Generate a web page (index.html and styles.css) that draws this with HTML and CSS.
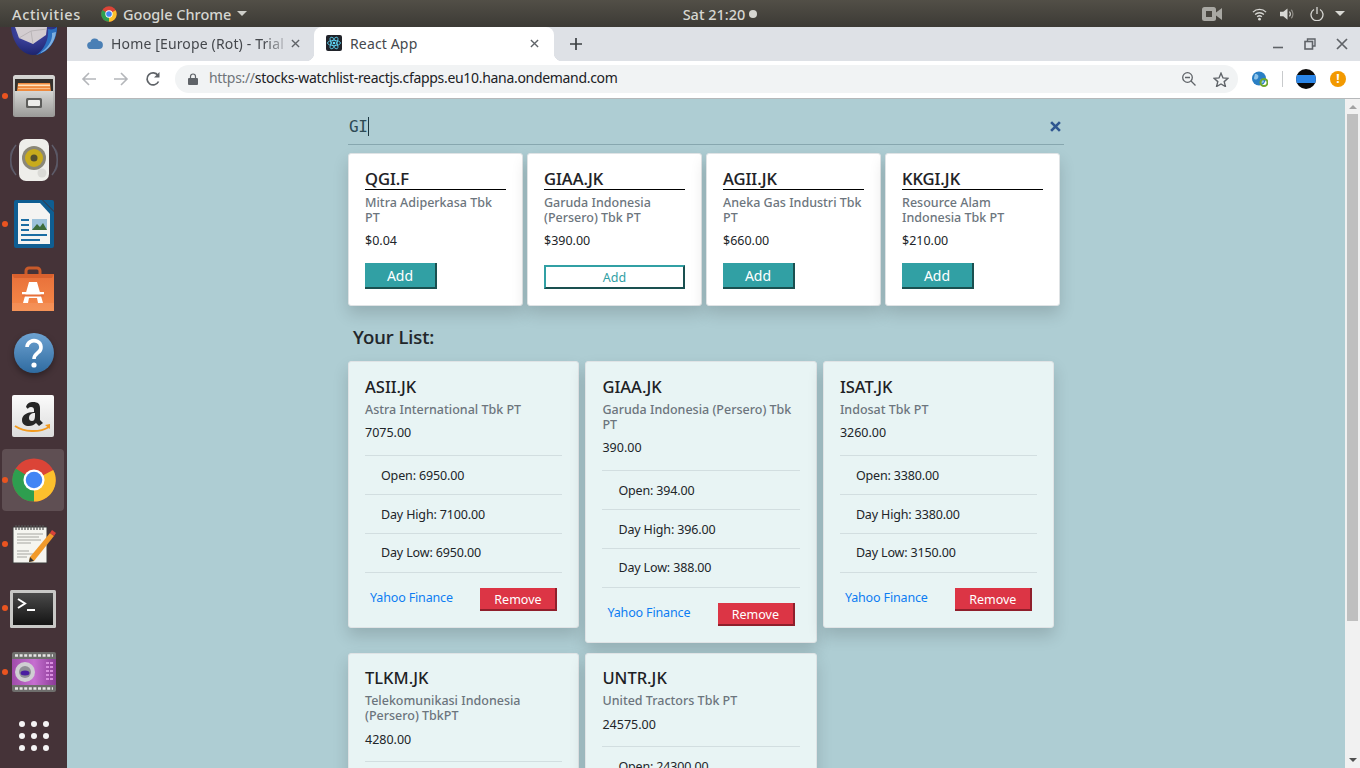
FILE: index.html
```html
<!DOCTYPE html>
<html lang="en">
<head>
<meta charset="utf-8">
<title>React App</title>
<link rel="stylesheet" href="styles.css">
</head>
<body>
<svg class="defs" width="0" height="0">
  <defs>
    <linearGradient id="gCab" x1="0" y1="0" x2="0" y2="1"><stop offset="0" stop-color="#d6d6d4"/><stop offset="1" stop-color="#9a9a98"/></linearGradient>
    <linearGradient id="gBag" x1="0" y1="0" x2="0" y2="1"><stop offset="0" stop-color="#e8703a"/><stop offset="1" stop-color="#f58a4a"/></linearGradient>
    <linearGradient id="gHelp" x1="0" y1="0" x2="0" y2="1"><stop offset="0" stop-color="#6ea3d2"/><stop offset="1" stop-color="#2f6ba0"/></linearGradient>
    <linearGradient id="gAmz" x1="0" y1="0" x2="0" y2="1"><stop offset="0" stop-color="#fbfbfb"/><stop offset="1" stop-color="#dcdcdc"/></linearGradient>
    <linearGradient id="gTerm" x1="0" y1="0" x2="0" y2="1"><stop offset="0" stop-color="#4a4a4a"/><stop offset="1" stop-color="#141414"/></linearGradient>
    <linearGradient id="gCam" x1="0" y1="0" x2="1" y2="0"><stop offset="0" stop-color="#a04cab"/><stop offset=".5" stop-color="#c66fd0"/><stop offset="1" stop-color="#8a3a96"/></linearGradient>
    <radialGradient id="gTb" cx=".4" cy=".2" r=".9"><stop offset="0" stop-color="#4a4fb0"/><stop offset="1" stop-color="#171f66"/></radialGradient>
  </defs>
</svg>

<header class="topbar">
  <div class="topbar-left">
    <span class="activities">Activities</span>
    <span class="appmenu">
      <svg class="ico16" viewBox="0 0 48 48"><circle cx="24" cy="24" r="23" fill="#db4437"/><path d="M24 24 44 13A23 23 0 0 1 24 47Z" fill="#fbc02d"/><path d="M24 24 24 47A23 23 0 0 1 4 12Z" fill="#2e9e4f"/><circle cx="24" cy="24" r="11" fill="#fff"/><circle cx="24" cy="24" r="8.5" fill="#4285f4"/></svg>
      Google Chrome
      <svg class="caret" viewBox="0 0 10 5"><path d="M0 0h10L5 5z" fill="#cfcfca"/></svg>
    </span>
  </div>
  <div class="clock">Sat 21:20 <i class="clockdot"></i></div>
  <div class="tray">
    <svg class="tray-cam" viewBox="0 0 20 14"><rect x="0" y="0" width="14" height="14" rx="2.5" fill="#a9a8a3"/><rect x="4" y="4" width="6" height="6" fill="#48453f"/><path d="M14 5.500 20 1v12l-6-4.500z" fill="#a9a8a3"/></svg>
    <svg class="tray-wifi" viewBox="0 0 16 14"><path d="M1 5a10 10 0 0 1 14 0M3.300 7.500a7 7 0 0 1 9.400 0M5.500 10a3.800 3.800 0 0 1 5 0" fill="none" stroke="#d8d8d4" stroke-width="1.400"/><circle cx="8" cy="12.500" r="1.500" fill="#d8d8d4"/></svg>
    <svg class="tray-vol" viewBox="0 0 16 14"><path d="M0 4.500h3.500L8 1v12L3.500 9.500H0z" fill="#d8d8d4"/><path d="M10 4.500a3.500 3.500 0 0 1 0 5" fill="none" stroke="#d8d8d4" stroke-width="1.300"/><path d="M12 2.500a6.500 6.500 0 0 1 0 9" fill="none" stroke="#8d8b85" stroke-width="1.300"/></svg>
    <svg class="tray-pow" viewBox="0 0 14 14"><path d="M4 2.500a6 6 0 1 0 6 0" fill="none" stroke="#d8d8d4" stroke-width="1.300"/><path d="M7 0v7" stroke="#d8d8d4" stroke-width="1.300"/></svg>
    <svg class="caret tray-caret" viewBox="0 0 10 5"><path d="M0 0h10L5 5z" fill="#d8d8d4"/></svg>
  </div>
</header>

<div class="desktop">
  <nav class="dock">
    <div class="slot slot-first">
      <svg viewBox="0 0 48 29" class="dock-tb"><path d="M1 0h46C46 16 36 28 23 28 11 28 2 14 1 0z" fill="url(#gTb)"/><path d="M5 0 9 11 23 17 36 8 37 0z" fill="#d3cdd0"/><path d="M9 11 21 4M23 17 21 4 37 2" fill="none" stroke="#b3adb0" stroke-width=".8"/><path d="M38 2c4 1 7 0 9-2 0 14-9 26-21 28 8-5 13-15 12-26z" fill="#2b6fc0"/><path d="M42 6c1 8-5 16-12 20 8-2 15-11 16-21z" fill="#7fb0e0"/></svg>
    </div>
    <div class="slot running">
      <svg class="ic-cab" viewBox="0 0 44 44"><rect x="1" y="1" width="42" height="42" rx="2.500" fill="url(#gCab)"/><rect x="3" y="5" width="38" height="12" fill="#34302c"/><path d="M5 17 6 9h32l1 8z" fill="#ee8a3e"/><rect x="6" y="10.500" width="32" height="1.600" fill="#ffe3bd"/><rect x="6" y="14" width="32" height="1" fill="#f8c08a"/><path d="M3 17h38v26H3z" fill="url(#gCab)"/><rect x="14" y="24" width="16" height="10" rx="1.500" fill="#5d5d5b"/><rect x="16" y="26" width="12" height="6" rx="1" fill="#ececea"/></svg>
    </div>
    <div class="slot">
      <svg class="ic-rhy" viewBox="0 0 48 44"><path d="M6 7a24 24 0 0 0 0 30M42 7a24 24 0 0 1 0 30" fill="none" stroke="#6a6f80" stroke-width="1.500" opacity=".7"/><path d="M3 11a20 20 0 0 0 0 22M45 11a20 20 0 0 1 0 22" fill="none" stroke="#5a5866" stroke-width="1.500" opacity=".7"/><rect x="9" y="1" width="30" height="42" rx="7" fill="#eeeeea"/><circle cx="24" cy="20" r="12" fill="#8a8778"/><circle cx="24" cy="20" r="9" fill="#c8ab1c"/><circle cx="24" cy="20" r="3.500" fill="#55502e"/><circle cx="32" cy="35" r="4.500" fill="#dadad6"/></svg>
    </div>
    <div class="slot running">
      <svg class="ic-writer" viewBox="0 0 40 48"><path d="M2 0h26l12 12v34a2 2 0 0 1-2 2H2a2 2 0 0 1-2-2V2a2 2 0 0 1 2-2z" fill="#0f5e92"/><path d="M4 3h22l10 11v30H4z" fill="#f4f4f2"/><path d="M29 0h9a2 2 0 0 1 2 2v9z" fill="#0f5e92"/><path d="M7 19h8v2H7zM7 24h8v2H7zM7 29h8v2H7zM7 34h26v2H7zM7 39h19v2H7z" fill="#1a6da3"/><rect x="18" y="19" width="15" height="11" fill="#9cc2da"/><path d="M18 30l5-6 3 3 3-4 4 7z" fill="#3d6d3a"/></svg>
    </div>
    <div class="slot">
      <svg class="ic-bag" viewBox="0 0 42 46"><path d="M14 11V6a3 3 0 0 1 3-3h8a3 3 0 0 1 3 3v5" fill="none" stroke="#c85a2a" stroke-width="3"/><path d="M0 9h42v37H0z" fill="url(#gBag)"/><path d="M0 9h42l-2 4H2z" fill="#d9612e"/><path d="M17 17h8l6 21h-5l-1-5h-8l-1 5h-5z" fill="#fff"/><rect x="10" y="27" width="22" height="2.500" fill="#fff"/><rect x="10" y="29.500" width="22" height="2" fill="#e8703a"/><path d="M0 38h42v8H0z" fill="#fff" opacity=".08"/></svg>
    </div>
    <div class="slot">
      <svg class="ic-help" viewBox="0 0 40 40"><circle cx="20" cy="20" r="20" fill="url(#gHelp)"/><path d="M13 14a7 6.500 0 1 1 11 5.500c-2.500 2-4 3-4 6.500" fill="none" stroke="#fff" stroke-width="3.600"/><circle cx="20" cy="32" r="2.600" fill="#fff"/></svg>
    </div>
    <div class="slot">
      <svg class="ic-amz" viewBox="0 0 42 42"><rect width="42" height="42" rx="2" fill="url(#gAmz)"/><path d="M14 12c1-4 4-5 7-5 5 0 7 2 7 6v12l3 3-4 3-3-3c-2 2-4 3-7 3-4 0-7-2-7-6 0-5 5-8 12-8v-2c0-2-1-3-3-3s-3 1-3 2zM23 18c-4 0-6 2-6 5 0 2 1 3 3 3 2 0 3-2 3-5z" fill="#262626"/><path d="M3 31c9 6 24 7 34 1" fill="none" stroke="#f29a1f" stroke-width="2"/><path d="M33 30l5-1 0 5z" fill="#f29a1f"/></svg>
    </div>
    <div class="slot running active">
      <svg class="dock-ico" viewBox="0 0 48 48"><circle cx="24" cy="24" r="23.500" fill="#db4437"/><path d="M24 24 45 13A23.500 23.500 0 0 1 24 47.500Z" fill="#fbc02d"/><path d="M24 24 24 47.500A23.500 23.500 0 0 1 4 11.500Z" fill="#2e9e4f"/><circle cx="24" cy="24" r="11.500" fill="#fff"/><circle cx="24" cy="24" r="9" fill="#4285f4"/></svg>
    </div>
    <div class="slot running">
      <svg class="ic-note" viewBox="0 0 44 40"><path d="M1 3h34v36H1z" fill="#f5f5f0" stroke="#3a3a3a"/><path d="M4 1v5M7 1v5M10 1v5M13 1v5M16 1v5M19 1v5M22 1v5M25 1v5M28 1v5M31 1v5" stroke="#555" stroke-width="1.200"/><path d="M5 10h26M5 13h22M5 16h24M5 19h14M5 27h12M5 30h18M5 33h10" stroke="#a5a5a0"/><path d="M18 33 38 9l4 3-20 25-5 1z" fill="#f19a2a"/><path d="M38 9l2-3 4 3-2 3z" fill="#d9423a"/><path d="M17 38l1-5 4 4z" fill="#333"/></svg>
    </div>
    <div class="slot running">
      <svg class="ic-term" viewBox="0 0 46 38"><rect width="46" height="38" rx="1.500" fill="#c8c8c6"/><rect x="3" y="3" width="40" height="32" fill="url(#gTerm)"/><path d="M8 9l7 4.500-7 4.500" fill="none" stroke="#fff" stroke-width="2"/><path d="M17 20h8" stroke="#fff" stroke-width="2"/></svg>
    </div>
    <div class="slot running">
      <svg class="ic-cam" viewBox="0 0 44 40"><rect width="44" height="40" rx="2" fill="#6e6e6c"/><rect y="7" width="44" height="26" fill="url(#gCam)"/><path d="M3 3.500h38M3 36.500h38" stroke="#e6e6e4" stroke-width="2.500" stroke-dasharray="3 1.600"/><circle cx="13" cy="20" r="10" fill="#cfcfd2"/><circle cx="13" cy="20" r="6" fill="#8f8f96"/><ellipse cx="13" cy="21" rx="4.500" ry="2.500" fill="#4a1ea0"/><path d="M34 10h3v2h-3zM38 10h3v2h-3zM34 14h3v2h-3zM38 14h3v2h-3zM34 18h3v2h-3zM38 18h3v2h-3zM34 22h3v2h-3zM38 22h3v2h-3zM34 26h3v2h-3zM38 26h3v2h-3z" fill="#d98fe0"/></svg>
    </div>
    <div class="slot">
      <svg class="dock-grid" viewBox="0 0 30 30"><g fill="#f4f4f4"><circle cx="3" cy="3" r="3"/><circle cx="15" cy="3" r="3"/><circle cx="27" cy="3" r="3"/><circle cx="3" cy="15" r="3"/><circle cx="15" cy="15" r="3"/><circle cx="27" cy="15" r="3"/><circle cx="3" cy="27" r="3"/><circle cx="15" cy="27" r="3"/><circle cx="27" cy="27" r="3"/></g></svg>
    </div>
  </nav>

  <div class="browser">
    <div class="tabstrip">
      <div class="tab">
        <svg class="tab-fav" viewBox="0 0 16 11"><path d="M4 11a3.500 3.500 0 0 1-.6-7A4.500 4.500 0 0 1 11.800 3 4 4 0 0 1 12 11z" fill="#4a7fb5"/></svg>
        <span class="tab-title fade">Home [Europe (Rot) - Trial</span>
        <svg class="tab-x" viewBox="0 0 10 10"><path d="M1 1l8 8M9 1l-8 8" stroke="#5f6368" stroke-width="1.500"/></svg>
      </div>
      <div class="tab tab-active">
        <svg class="tab-fav16" viewBox="0 0 16 16"><rect width="16" height="16" rx="2" fill="#20232a"/><g fill="none" stroke="#61dafb" stroke-width=".8"><ellipse cx="8" cy="8" rx="6.500" ry="2.600"/><ellipse cx="8" cy="8" rx="6.500" ry="2.600" transform="rotate(60 8 8)"/><ellipse cx="8" cy="8" rx="6.500" ry="2.600" transform="rotate(120 8 8)"/></g><circle cx="8" cy="8" r="1.300" fill="#61dafb"/></svg>
        <span class="tab-title">React App</span>
        <svg class="tab-x" viewBox="0 0 10 10"><path d="M1 1l8 8M9 1l-8 8" stroke="#5f6368" stroke-width="1.500"/></svg>
      </div>
      <svg class="tab-new" viewBox="0 0 12 12"><path d="M6 0v12M0 6h12" stroke="#3c4043" stroke-width="1.700"/></svg>
      <div class="winctl">
        <svg class="win-ico" viewBox="0 0 12 12"><path d="M1 9.500h10" stroke="#5f6368" stroke-width="1.600"/></svg>
        <svg class="win-ico" viewBox="0 0 12 12"><path d="M3.500 3.500V1h7.500v7h-2.500" fill="none" stroke="#5f6368" stroke-width="1.400"/><rect x="1" y="3.500" width="7.500" height="7.500" fill="none" stroke="#5f6368" stroke-width="1.600"/></svg>
        <svg class="win-ico" viewBox="0 0 12 12"><path d="M1 1l10 10M11 1 1 11" stroke="#5f6368" stroke-width="1.700"/></svg>
      </div>
    </div>

    <div class="toolbar">
      <svg class="nav-ico" viewBox="0 0 16 16"><path d="M15 8H2M8 2 2 8l6 6" fill="none" stroke="#b4b6ba" stroke-width="1.600"/></svg>
      <svg class="nav-ico" viewBox="0 0 16 16"><path d="M1 8h13M8 2l6 6-6 6" fill="none" stroke="#b4b6ba" stroke-width="1.600"/></svg>
      <svg class="nav-ico" viewBox="0 0 16 16"><path d="M13.500 10.500A6 6 0 1 1 13 4.500" fill="none" stroke="#5f6368" stroke-width="1.700"/><path d="M14.500 1v5.500H9z" fill="#5f6368"/></svg>
      <div class="omnibox">
        <svg class="lock" viewBox="0 0 10 12"><path d="M2.500 5V3.500a2.500 2.500 0 0 1 5 0V5" fill="none" stroke="#5f6368" stroke-width="1.200"/><rect y="5" width="10" height="7" rx="1" fill="#5f6368"/></svg>
        <span class="url"><span class="url-scheme">https://</span>stocks-watchlist-reactjs.cfapps.eu10.hana.ondemand.com</span>
        <svg class="omni-zoom" viewBox="0 0 14 14"><circle cx="5.500" cy="5.500" r="4.800" fill="none" stroke="#5f6368" stroke-width="1.300"/><path d="M3 5.500h5M9 9l4.500 4.500" stroke="#5f6368" stroke-width="1.300"/></svg>
        <svg class="omni-star" viewBox="0 0 16 15"><path d="M8 1.200l2 4.700 5 .4-3.800 3.300 1.200 4.900L8 12l-4.400 2.500 1.200-4.900L1 6.300l5-.4z" fill="none" stroke="#5f6368" stroke-width="1.400"/></svg>
      </div>
      <svg class="ext-globe" viewBox="0 0 16 16"><circle cx="7" cy="7.500" r="7" fill="#2a7fc4"/><path d="M3 3c3 0 4 2 3 4S2 9 2 7zM8 9c2-1 4 0 4 2l-3 2z" fill="#8fc4ea"/><circle cx="12" cy="11.500" r="3.500" fill="none" stroke="#6fa82e" stroke-width="2"/></svg>
      <i class="tb-sep"></i>
      <span class="avatar"><i class="avatar-band"></i></span>
      <span class="warn">!</span>
    </div>

    <div class="viewport">
      <main class="page">
        <div class="wrap">
          <div class="search">
            <span class="search-text">GI<i class="cursor"></i></span>
            <svg class="search-x" viewBox="0 0 10 10"><path d="M1 1l8 8M9 1l-8 8" stroke="#2f5690" stroke-width="2.400"/></svg>
          </div>

          <section class="results">
            <article class="rcard">
              <h3 class="rtitle">QGI.F</h3>
              <p class="sub">Mitra Adiperkasa Tbk PT</p>
              <p class="price">$0.04</p>
              <button class="add">Add</button>
            </article>
            <article class="rcard">
              <h3 class="rtitle">GIAA.JK</h3>
              <p class="sub">Garuda Indonesia (Persero) Tbk PT</p>
              <p class="price">$390.00</p>
              <button class="add add-hover">Add</button>
            </article>
            <article class="rcard">
              <h3 class="rtitle">AGII.JK</h3>
              <p class="sub">Aneka Gas Industri Tbk PT</p>
              <p class="price">$660.00</p>
              <button class="add">Add</button>
            </article>
            <article class="rcard">
              <h3 class="rtitle">KKGI.JK</h3>
              <p class="sub">Resource Alam Indonesia Tbk PT</p>
              <p class="price">$210.00</p>
              <button class="add">Add</button>
            </article>
          </section>

          <h2 class="list-head">Your List:</h2>

          <section class="list">
            <article class="lcard">
              <h3 class="ltitle">ASII.JK</h3>
              <p class="sub">Astra International Tbk PT</p>
              <p class="price lprice">7075.00</p>
              <ul class="stats"><li>Open: 6950.00</li><li>Day High: 7100.00</li><li>Day Low: 6950.00</li></ul>
              <div class="lfoot"><a class="yf">Yahoo Finance</a><button class="remove">Remove</button></div>
            </article>
            <article class="lcard">
              <h3 class="ltitle">GIAA.JK</h3>
              <p class="sub">Garuda Indonesia (Persero) Tbk PT</p>
              <p class="price lprice">390.00</p>
              <ul class="stats"><li>Open: 394.00</li><li>Day High: 396.00</li><li>Day Low: 388.00</li></ul>
              <div class="lfoot"><a class="yf">Yahoo Finance</a><button class="remove">Remove</button></div>
            </article>
            <article class="lcard">
              <h3 class="ltitle">ISAT.JK</h3>
              <p class="sub">Indosat Tbk PT</p>
              <p class="price lprice">3260.00</p>
              <ul class="stats"><li>Open: 3380.00</li><li>Day High: 3380.00</li><li>Day Low: 3150.00</li></ul>
              <div class="lfoot"><a class="yf">Yahoo Finance</a><button class="remove">Remove</button></div>
            </article>
            <article class="lcard">
              <h3 class="ltitle">TLKM.JK</h3>
              <p class="sub">Telekomunikasi Indonesia (Persero) TbkPT</p>
              <p class="price lprice">4280.00</p>
              <ul class="stats"><li>Open: 4280.00</li></ul>
            </article>
            <article class="lcard">
              <h3 class="ltitle">UNTR.JK</h3>
              <p class="sub">United Tractors Tbk PT</p>
              <p class="price lprice">24575.00</p>
              <ul class="stats"><li>Open: 24300.00</li></ul>
            </article>
          </section>
        </div>
      </main>
      <div class="scrollbar">
        <svg class="sb-arrow" viewBox="0 0 8 4"><path d="M4 0l4 4H0z" fill="#a3a3a3"/></svg>
        <div class="sb-thumb"></div>
        <svg class="sb-arrow" viewBox="0 0 8 4"><path d="M0 0h8L4 4z" fill="#505050"/></svg>
      </div>
    </div>
  </div>
</div>
</body>
</html>
```
FILE: styles.css
```css
* { box-sizing: border-box; }
html, body { margin: 0; height: 100%; }
body {
  width: 1360px; height: 768px; overflow: hidden;
  display: flex; flex-direction: column;
  font-family: "Noto Sans", "Open Sans", sans-serif;
  color: #212529;
  background: #453338;
}
.defs { position: absolute; }
svg { display: block; flex: none; }
p, h2, h3, ul { margin: 0; padding: 0; }

/* top bar */
.topbar {
  height: 27px; flex: none; display: grid; grid-template-columns: 1fr auto 1fr; align-items: center;
  background: linear-gradient(#524f47, #3c3a35);
  color: #d6d6d1; font-size: 14.500px; font-weight: 500;
}
.topbar-left { display: flex; align-items: center; padding-left: 12px; gap: 20px; }
.activities { letter-spacing: .65px; }
.appmenu { display: flex; align-items: center; gap: 6px; }
.ico16 { width: 16px; height: 16px; }
.caret { width: 10px; height: 5px; margin-left: 0; }
.clock { display: flex; align-items: center; gap: 4px; padding-left: 80px; }
.clockdot { width: 8px; height: 8px; border-radius: 50%; background: #d6d6d1; }
.tray { display: flex; align-items: center; justify-content: flex-end; }
.tray-cam { width: 20px; height: 14px; margin-right: 30px; }
.tray-wifi { width: 15px; height: 14px; margin-right: 13px; }
.tray-vol { width: 15px; height: 14px; margin-right: 15px; }
.tray-pow { width: 14px; height: 14px; margin-right: 11px; }
.tray-caret { margin: 0 15px 0 0; }

.desktop { flex: 1; display: flex; min-height: 0; }

/* dock */
.dock { width: 67px; flex: none; background: #453338; display: flex; flex-direction: column; overflow: hidden; }
.slot { height: 64px; flex: none; display: flex; align-items: center; justify-content: center; position: relative; }
.slot-first { height: 37px; align-items: flex-start; }
.dock-tb { width: 48px; height: 29px; }
.dock-ico { width: 44px; height: 44px; }
.ic-cab { width: 44px; height: 44px; }
.ic-rhy { width: 48px; height: 44px; }
.ic-writer { width: 40px; height: 48px; }
.ic-bag { width: 42px; height: 46px; margin-right: 1px; }
.ic-help { width: 40px; height: 40px; margin-top: 1px; filter: drop-shadow(0 3px 3px rgba(0,0,0,.35)); }
.ic-amz { width: 42px; height: 42px; margin-right: 1px; }
.ic-note { width: 44px; height: 40px; }
.ic-term { width: 46px; height: 38px; margin: 2px 1px 0 0; }
.ic-cam { width: 44px; height: 40px; }
.dock-grid { width: 30px; height: 30px; }
.running::before {
  content: ""; position: absolute; left: 2px; top: 50%; margin-top: -3px;
  width: 6px; height: 6px; border-radius: 50%; background: #e95420; z-index: 1;
}
.active::after {
  content: ""; position: absolute; left: 2px; top: 1px; width: 62px; height: 62px;
  border-radius: 4px; background: #5f4f53;
}
.active .dock-ico { position: relative; z-index: 1; }

/* browser */
.browser { flex: 1; min-width: 0; display: flex; flex-direction: column; background: #fff; }
.tabstrip { height: 34px; flex: none; background: #dee1e6; display: flex; align-items: flex-end; }
.tab { width: 247px; height: 34px; display: flex; align-items: center; padding: 0 14px 2px 20px; color: #45484d; font-size: 14px; letter-spacing: .15px; }
.tab-active {
  width: 240px; background: #fff; border-radius: 8px 8px 0 0; padding: 0 15px 2px 12px; position: relative;
}
.tab-active::before, .tab-active::after {
  content: ""; position: absolute; bottom: 0; width: 8px; height: 8px;
}
.tab-active::before { left: -8px; background: radial-gradient(circle at 0 0, #dee1e6 8px, #fff 8.5px); }
.tab-active::after { right: -8px; background: radial-gradient(circle at 100% 0, #dee1e6 8px, #fff 8.5px); }
.tab-fav { width: 16px; height: 11px; margin-right: 8px; }
.tab-fav16 { width: 16px; height: 16px; margin-right: 8px; }
.tab-title { flex: 1; white-space: nowrap; overflow: hidden; }
.fade { -webkit-mask-image: linear-gradient(90deg, #000 85%, transparent 100%); mask-image: linear-gradient(90deg, #000 85%, transparent 100%); }
.tab-x { width: 9px; height: 9px; }
.tab-new { width: 12px; height: 12px; margin: 0 0 11px 16px; }
.winctl { margin-left: auto; display: flex; align-items: center; gap: 20px; height: 34px; padding: 0 12px 0 0; }
.win-ico { width: 12px; height: 12px; }

.toolbar { height: 38px; flex: none; display: flex; align-items: flex-start; padding: 4px 0 0 14px; border-bottom: 1px solid #b6b8ba; background: #fff; }
.nav-ico { width: 16px; height: 16px; margin: 6px 16px 0 0; }
.omnibox {
  width: 1063px; height: 28px; margin-left: -2px; border-radius: 14px; background: #f1f3f4;
  display: flex; align-items: center; padding: 0 9px 0 13px;
}
.lock { width: 10px; height: 12px; margin-right: 11px; }
.url { flex: 1; font-size: 14px; line-height: 26px; padding-bottom: 2px; color: #202124; white-space: nowrap; letter-spacing: -.31px; }
.url-scheme { color: #70757a; }
.omni-zoom { width: 14px; height: 14px; margin-right: 17px; }
.omni-star { width: 16px; height: 15px; }
.ext-globe { width: 16px; height: 16px; margin: 6px 0 0 14px; }
.tb-sep { width: 1px; height: 16px; background: #c8cacc; margin: 6px 0 0 14px; }
.avatar { width: 20px; height: 20px; margin: 4px 0 0 13px; border-radius: 50%; background: #0a0a0a; display: flex; align-items: center; overflow: hidden; }
.avatar-band { width: 100%; height: 8px; background: #2b86e8; }
.warn { width: 16px; height: 16px; margin: 6px 0 0 14px; border-radius: 50%; background: #f29900; color: #fff; font-size: 12px; font-weight: 700; line-height: 16px; text-align: center; }

/* page */
.viewport { flex: 1; min-height: 0; display: flex; background: #aecdd3; }
.page { flex: 1; min-width: 0; overflow: hidden; }
.wrap { width: 716px; margin: 0 0 0 281px; }
.search { height: 46px; display: flex; align-items: center; justify-content: space-between; border-bottom: 1px solid #87a7af; padding: 9px 3px 0 1px; }
.search-text { font-family: "DejaVu Sans Mono", monospace; font-size: 16px; letter-spacing: -.4px; color: #2d4a54; display: flex; align-items: center; }
.cursor { width: 1px; height: 19px; background: #1c3640; margin-left: 1px; }
.search-x { width: 11px; height: 11px; }

.results { display: flex; gap: 4px; margin-top: 8px; }
.rcard {
  width: 175px; height: 153px; padding: 15px 16px 0; background: #fff;
  border: 1px solid #dfe3e5; border-radius: 3px; box-shadow: 0 8px 16px rgba(0,0,0,.15);
  display: flex; flex-direction: column;
}
.rtitle { font-size: 16.500px; line-height: 20px; font-weight: 500; -webkit-text-stroke: .15px; color: #1d2125; border-bottom: 1px solid #000; margin-bottom: 5px; }
.sub { font-size: 12.500px; line-height: 15px; font-weight: 500; color: #6c757d; }
.price { font-size: 12.500px; line-height: 16px; margin-top: 8px; color: #212529; }
.add {
  width: 72px; height: 26px; margin-top: 14px; padding: 0; border: 0;
  border-right: 2px solid #1a5050; border-bottom: 2px solid #1a5050;
  background: #31a0a4; color: #fff; font: 14px "Noto Sans", sans-serif;
}
.add-hover {
  width: 141px; height: 24px; margin-top: 16px; border: 2px solid #31a0a4; border-right-color: #1a5050; border-bottom-color: #1a5050;
  background: #fff; color: #31a0a4; font-size: 12.500px;
}

.list-head { font-size: 18.500px; line-height: 24px; font-weight: 500; -webkit-text-stroke: .15px; color: #212529; margin: 19px 0 12px 5px; }
.list { display: flex; flex-wrap: wrap; align-items: flex-start; column-gap: 6px; row-gap: 10px; }
.lcard {
  width: 231.450px; padding: 15px 16px 0; background: #e8f4f4;
  border: 1px solid #dfe3e5; border-radius: 3px; box-shadow: 0 8px 16px rgba(0,0,0,.15);
}
.ltitle { font-size: 16.500px; line-height: 20px; font-weight: 500; color: #1d2125; margin-bottom: 5px; }
.lprice { margin-top: 8px; margin-bottom: 14px; }
.lcard:nth-child(n+4) .ltitle { margin-top: -1px; }
.lcard:nth-child(n+4) .lprice { margin-top: 9px; margin-bottom: 13px; }
.stats { list-style: none; border-top: 1px solid #d2dee0; }
.stats li { height: 39px; padding-left: 16px; font-size: 12.500px; line-height: 39px; letter-spacing: -.15px; border-bottom: 1px solid #d2dee0; }
.stats li:nth-child(3) { line-height: 38px; }
.lfoot { display: flex; align-items: center; justify-content: space-between; padding: 15px 5px 16px 5px; }
.yf { font-size: 12.500px; letter-spacing: -.15px; color: #0d7cf2; margin-top: -5px; }
.remove {
  width: 77px; height: 23px; padding: 2px 0 0; border: 0;
  border-right: 2px solid #8f1f2b; border-bottom: 2px solid #8f1f2b;
  background: #dc3545; color: #fff; font: 12.500px "Noto Sans", sans-serif;
}

.scrollbar { width: 15px; flex: none; background: #f1f1f1; display: flex; flex-direction: column; align-items: center; padding: 6px 0 6px; }
.sb-arrow { width: 8px; height: 4px; }
.sb-thumb { width: 11px; height: 507px; background: #bfbfbf; margin-top: 5px; margin-bottom: auto; }
```
